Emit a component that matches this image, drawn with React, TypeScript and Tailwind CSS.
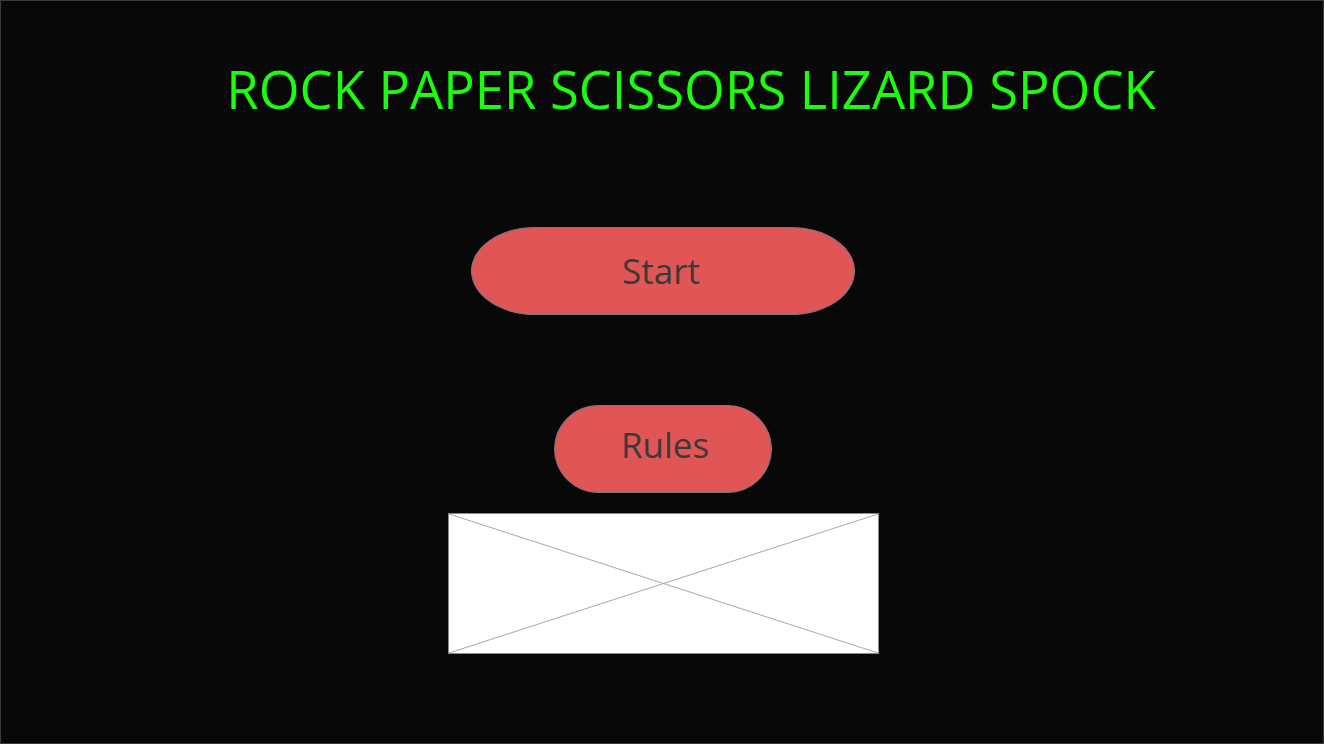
import React from 'react';

const Placeholder: React.FC = () => (
  <div className="relative w-[431px] h-[141px] bg-white border border-[#8a8a8a]">
    <svg className="absolute inset-0 w-full h-full" viewBox="0 0 429 139" preserveAspectRatio="none">
      <line x1="0" y1="0" x2="429" y2="139" stroke="#a8a8a8" strokeWidth="1" />
      <line x1="0" y1="139" x2="429" y2="0" stroke="#a8a8a8" strokeWidth="1" />
    </svg>
  </div>
);

export default function App() {
  return (
    <div
      className="w-[1324px] h-[744px] bg-[#080808] border border-[#3a3a3a] flex flex-col items-center"
      style={{ fontFamily: '"Open Sans", "Noto Sans", sans-serif' }}
    >
      {/* TITULO */}
      <h1 className="mt-[53px] pl-[58px] text-[52.5px] leading-[70px] text-[#1aff0a] whitespace-nowrap">
        ROCK PAPER SCISSORS LIZARD SPOCK
      </h1>

      {/* BOTONES */}
      <button className="mt-[103px] ml-[2px] w-[384px] h-[88px] rounded-[64px/44px] bg-[#e05656] border border-[#7a7a7a] text-[35px] text-[#3a3a3a]">
        <span className="relative -left-[2px]">Start</span>
      </button>
      <button className="mt-[90px] ml-[2px] w-[218px] h-[88px] pb-[7px] rounded-[44px] bg-[#e05656] border border-[#7a7a7a] text-[35px] text-[#3a3a3a]">
        <span className="relative left-[2px]">Rules</span>
      </button>

      <div className="mt-[20px] ml-[2px]">
        <Placeholder />
      </div>
    </div>
  );
}
